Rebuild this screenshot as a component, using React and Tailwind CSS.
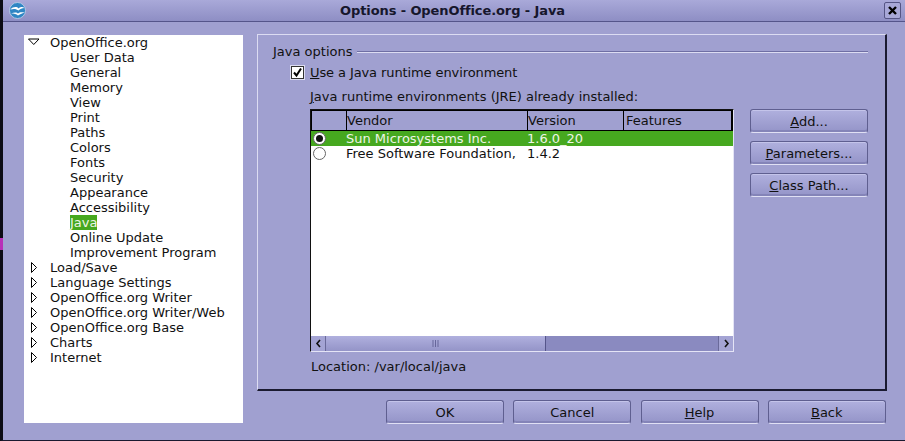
const font = { fontFamily: '"DejaVu Sans", sans-serif' };

const SETTINGS = ["User Data", "General", "Memory", "View", "Print", "Paths", "Colors", "Fonts", "Security", "Appearance", "Accessibility", "Java", "Online Update", "Improvement Program"];
const GROUPS = ["Load/Save", "Language Settings", "OpenOffice.org Writer", "OpenOffice.org Writer/Web", "OpenOffice.org Base", "Charts", "Internet"];

function Logo() {
  return (
    <svg width="17" height="17" viewBox="0 0 17 17">
      <circle cx="8.5" cy="8.5" r="8" fill="#2f86c4" stroke="#c4d4ea" strokeWidth="0.8" />
      <path d="M1.5 7.5C4 4.5 8 4.5 9.5 6.5C11 5 13.5 4.5 15.5 6C13 6 11 7 9.5 8.5C7.5 6.8 4.5 6.5 1.5 7.5Z" fill="#fff" />
      <path d="M2 11.5C5 10 8 10 9 11.5C10.5 10 13 10 15.5 10.5C13 11.5 10.5 12.5 9 13.5C7.5 12 5 11.5 2 11.5Z" fill="#fff" />
    </svg>
  );
}

function Arrow({ open }) {
  return (
    <svg width="13" height="15" viewBox="0 0 13 15" className="shrink-0">
      {open
        ? <path d="M0.5 4H11L5.750 9.500Z" fill="#fff" stroke="#000" strokeWidth="1" />
        : <path d="M3.5 2.5V12.5L8.5 7.5Z" fill="#fff" stroke="#000" strokeWidth="1" />}
    </svg>
  );
}

function Btn({ className = "", children }) {
  return (
    <button className={`h-[24px] w-[118px] rounded-[3px] border border-[#5f5f90] border-b-[#e0e0f4] bg-gradient-to-b from-[#b0b0de] to-[#9494c8] text-[13px] leading-none text-[#111] shadow-[inset_0_-2px_0_#8484b8,inset_0_1px_0_#c4c4ea] ${className}`}>
      {children}
    </button>
  );
}

function Radio({ on }) {
  return (
    <span className="flex h-[13px] w-[13px] items-center justify-center rounded-full border border-[#666] bg-white">
      {on && <span className="h-[7px] w-[7px] rounded-full bg-[#111]" />}
    </span>
  );
}

function Tree() {
  return (
    <div className="flex w-[219px] flex-col whitespace-nowrap bg-white text-[13px] leading-[15px] text-[#111]">
      <div className="flex h-[15px] items-center pl-[4px]">
        <Arrow open />
        <span className="ml-[9px]">OpenOffice.org</span>
      </div>
      {SETTINGS.map((s) => (
        <div key={s} className="h-[15px] pl-[46px]">
          <span className={s === "Java" ? "inline-block bg-[#46a81f] text-[#eef5e6]" : ""}>{s}</span>
        </div>
      ))}
      {GROUPS.map((g) => (
        <div key={g} className="flex h-[15px] items-center pl-[4px]">
          <Arrow />
          <span className="ml-[9px]">{g}</span>
        </div>
      ))}
    </div>
  );
}

function JreTable() {
  return (
    <div className="flex h-[243px] w-[424px] flex-col border border-[#111] border-r-[#e4e4f6] border-b-[#e4e4f6] bg-white text-[13px] leading-[15px]">
      <div className="grid h-[21px] grid-cols-[35px_181px_96px_1fr] border border-black border-r-2 bg-[#a0a0d0] text-[#111]">
        <div className="border-r border-black" />
        <div className="border-r border-black pt-[2px]">Vendor</div>
        <div className="border-r border-black pt-[2px]">Version</div>
        <div className="pl-[2px] pt-[2px]">Features</div>
      </div>
      <div className="grid h-[15px] grid-cols-[35px_181px_1fr] bg-[#46a81f] text-[#eef5e6]">
        <div className="flex items-center pl-[2px]"><Radio on /></div>
        <div>Sun Microsystems Inc.</div>
        <div>1.6.0_20</div>
      </div>
      <div className="grid h-[15px] grid-cols-[35px_181px_1fr] text-[#111]">
        <div className="flex items-center pl-[2px]"><Radio /></div>
        <div className="overflow-hidden whitespace-nowrap">Free Software Foundation,</div>
        <div>1.4.2</div>
      </div>
      <div className="flex-1" />
      <div className="flex h-[15px] bg-[#8a8ac0]">
        <div className="flex w-[15px] items-center justify-center border-r border-[#6a6a9a] bg-[#a4a4d4]">
          <svg width="7" height="9" viewBox="0 0 7 9"><path d="M5 1L2 4.5L5 8" fill="none" stroke="#111" strokeWidth="1.6" /></svg>
        </div>
        <div className="flex w-[220px] items-center justify-center border-r border-[#55558a] bg-gradient-to-b from-[#b0b0de] to-[#9494c8]">
          <svg width="7" height="7" viewBox="0 0 7 7"><path d="M1 0V7M3.500 0V7M6 0V7" stroke="#66669a" strokeWidth="1" /></svg>
        </div>
        <div className="flex-1" />
        <div className="flex w-[15px] items-center justify-center border-l border-[#6a6a9a] bg-[#a4a4d4]">
          <svg width="7" height="9" viewBox="0 0 7 9"><path d="M2 1L5 4.500L2 8" fill="none" stroke="#111" strokeWidth="1.6" /></svg>
        </div>
      </div>
    </div>
  );
}

function JavaPanel() {
  return (
    <div className="flex h-[357px] w-[630px] flex-col border border-t-[#dcdcf2] border-l-[#dcdcf2] border-r-2 border-b-2 border-r-[#1a1a30] border-b-[#1a1a30] pl-[15px] pr-[17px] pt-[9px] text-[13px] leading-[15px] text-[#111]">
      <div className="flex items-center">
        <span>Java options</span>
        <span className="ml-[5px] h-[2px] flex-1 border-t border-[#6f6fa4] bg-[#dcdcf2]" />
      </div>
      <div className="ml-[18px] mt-[6px] flex items-center">
        <span className="flex h-[13px] w-[13px] items-center justify-center border border-[#333] bg-white outline outline-1 outline-[#dcdcf2]">
          <svg width="11" height="11" viewBox="0 0 11 11"><path d="M2 5.500L4.500 8.500L9 1.500" fill="none" stroke="#000" strokeWidth="2" /></svg>
        </span>
        <span className="ml-[6px] tracking-[-0.1px]"><u>U</u>se a Java runtime environment</span>
      </div>
      <div className="ml-[37px] mt-[9px]"><u>J</u>ava runtime environments (JRE) already installed:</div>
      <div className="ml-[37px] mt-[5px] flex">
        <JreTable />
        <div className="ml-[16px] flex flex-col gap-[8px]">
          <Btn><u>A</u>dd...</Btn>
          <Btn><u>P</u>arameters...</Btn>
          <Btn><u>C</u>lass Path...</Btn>
        </div>
      </div>
      <div className="ml-[38px] mt-[7px]">Location: /var/local/java</div>
    </div>
  );
}

export default function App() {
  return (
    <div style={font} className="relative flex h-[441px] w-[905px] flex-col border-b border-l-[3px] border-b-[#1a1a30] border-l-[#0c0c14] bg-[#a0a0d0]">
      <span className="absolute left-[-3px] top-[238px] h-[12px] w-[3px] bg-[#b830b8]" />
      <div className="flex h-[22px] shrink-0 items-center border-b border-[#55558a] bg-gradient-to-b from-[#a9a9d9] to-[#8e8ec4] pl-[6px] pr-[4px]">
        <Logo />
        <div className="mr-[5px] flex-1 text-center text-[13px] font-bold tracking-[-0.1px] text-[#16162c]">Options - OpenOffice.org - Java</div>
        <div className="flex h-[17px] w-[17px] items-center justify-center rounded-[2px] border border-[#555585] bg-[#a8a8d8]">
          <svg width="11" height="11" viewBox="0 0 11 11"><path d="M2 2L9 9M9 2L2 9" stroke="#000" strokeWidth="2.400" /></svg>
        </div>
      </div>
      <div className="flex pl-[21px] pt-[12px]">
        <div className="mt-[1px] flex h-[388px] flex-col bg-white">
          <Tree />
        </div>
        <div className="ml-[14px] flex flex-col">
          <JavaPanel />
          <div className="ml-[129px] mt-[9px] flex gap-[9.250px]">
            <Btn>OK</Btn>
            <Btn>Cancel</Btn>
            <Btn><u>H</u>elp</Btn>
            <Btn><u>B</u>ack</Btn>
          </div>
        </div>
      </div>
    </div>
  );
}
